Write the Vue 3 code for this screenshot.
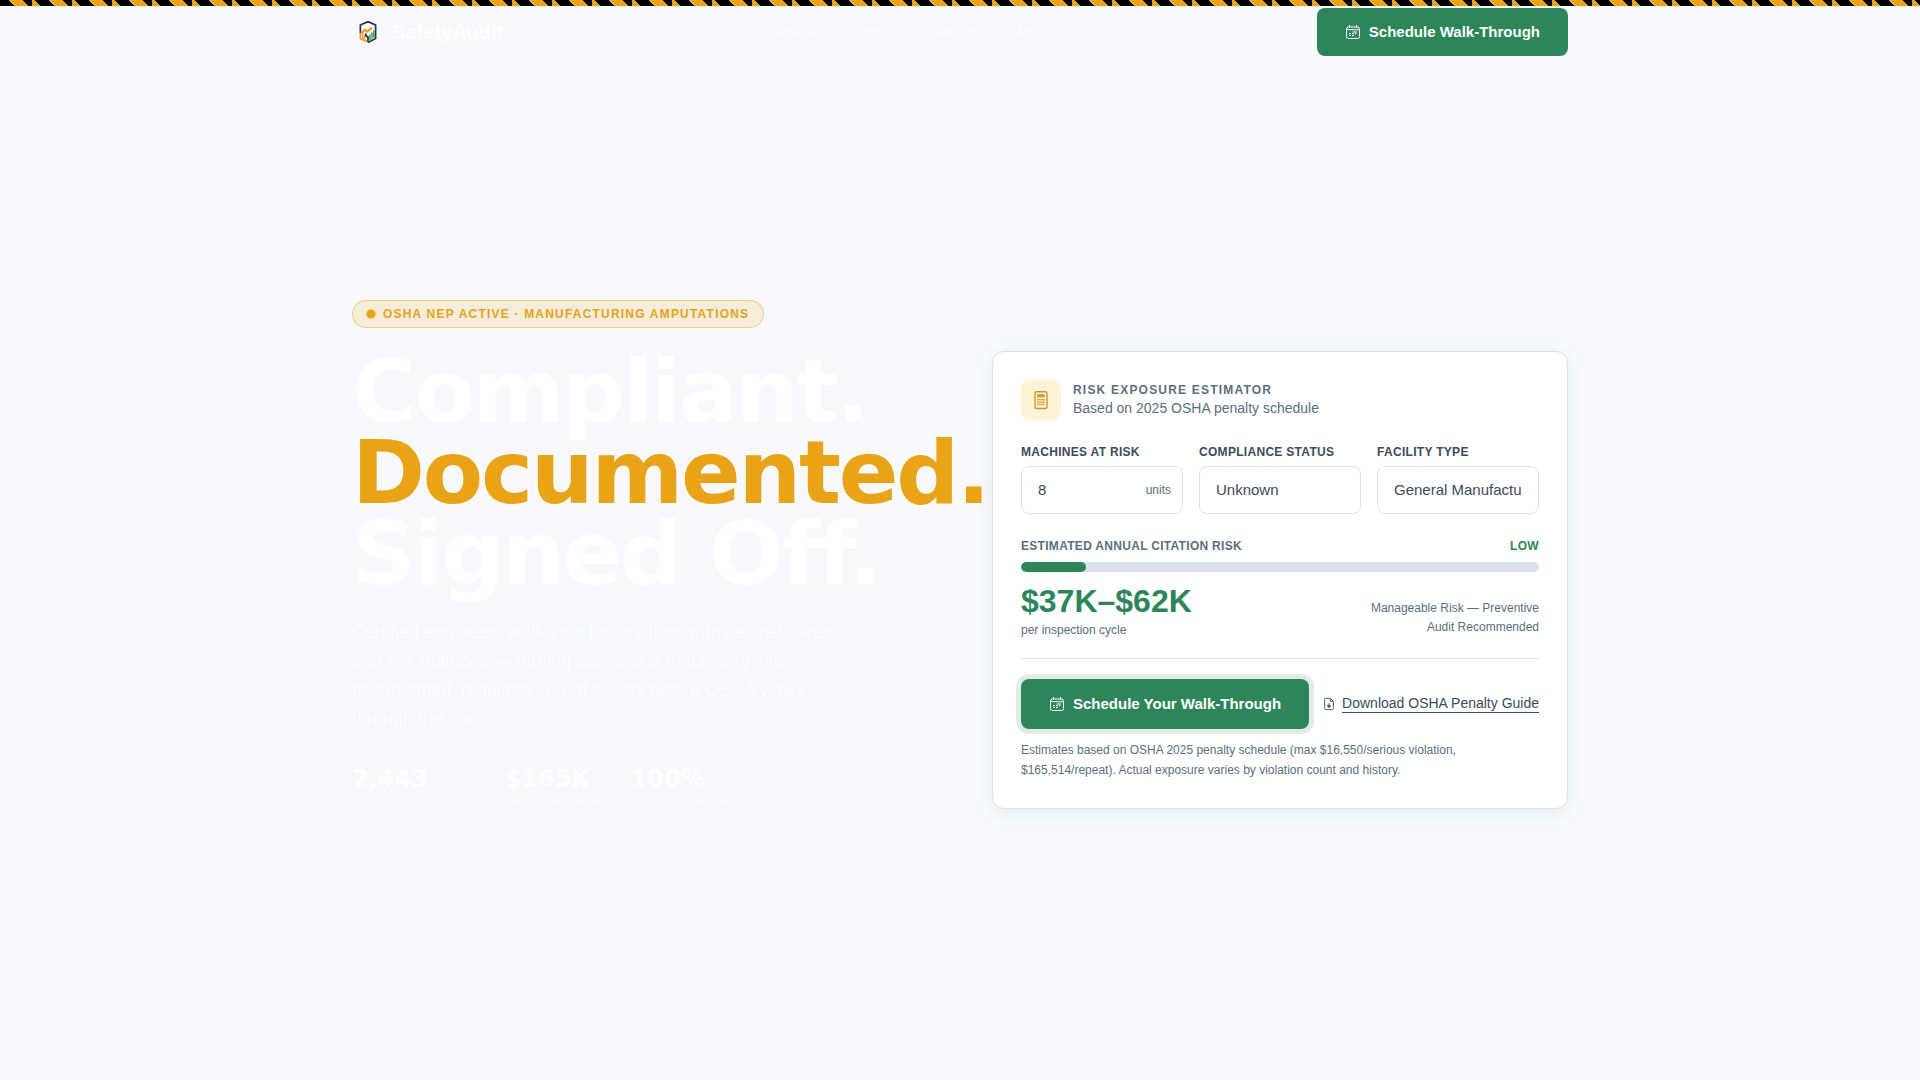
<script setup>
import { computed, ref } from "vue";

const navLinks = ["Services", "Process", "Results", "About"];

const stats = [
  { value: "2,443", label: "LOTO violations in 2024" },
  { value: "$165K", label: "max repeat penalty" },
  { value: "100%", label: "roadmap guarantee" }
];

const statusOptions = [
  { value: "unknown", label: "Unknown", weight: 1 },
  { value: "partial", label: "Partially compliant", weight: 0.8 },
  { value: "none", label: "Non-compliant", weight: 2.4 }
];

const facilityOptions = [
  { value: "general", label: "General Manufacturing", weight: 1 },
  { value: "metal", label: "Metal Fabrication", weight: 1.4 },
  { value: "food", label: "Food Processing", weight: 1.2 }
];

const machines = ref(8);
const complianceStatus = ref("unknown");
const facilityType = ref("general");

function weightOf(options, value) {
  return options.find((option) => option.value === value)?.weight ?? 1;
}

const exposure = computed(
  () =>
    (Number(machines.value) || 0) *
    weightOf(statusOptions, complianceStatus.value) *
    weightOf(facilityOptions, facilityType.value)
);

const estimateRange = computed(() => {
  const low = Math.round(exposure.value * 4.65);
  const high = Math.round(exposure.value * 7.75);

  return `$${low}K–$${high}K`;
});

const barWidth = computed(() => `${Math.min(100, exposure.value * 1.5625)}%`);

const riskLevel = computed(() => {
  if (exposure.value < 20) {
    return { key: "low", label: "Low", text: "Manageable Risk — Preventive Audit Recommended" };
  }

  if (exposure.value < 45) {
    return { key: "medium", label: "Medium", text: "Elevated Risk — Schedule Audit Soon" };
  }

  return { key: "high", label: "High", text: "Critical Risk — Immediate Audit Required" };
});
</script>

<template>
  <div class="page">
    <div class="hazard-stripe"></div>

    <header class="site-header">
      <div class="container site-header__inner">
        <a class="brand" href="#">
          <svg class="brand__mark" viewBox="0 0 32 32" fill="none" aria-hidden="true">
            <path d="M16 5.6 23.6 9v13.6L16 26.4" stroke="#263746" stroke-width="1.7" stroke-linejoin="round" />
            <path d="M16 5.6 8.4 9v8.4" stroke="#263746" stroke-width="1.7" stroke-linejoin="round" />
            <path d="M10 10.4 16 7.6l6 2.8-2 1.8-4-1.4-4 2z" fill="#fff" />
            <path d="M8.4 18v4.6L15.6 26" stroke="#f39a2e" stroke-width="1.7" />
            <path d="m9.4 17.6 3.4-3.8 2.4 1.8 4.6-4" stroke="#f39a2e" stroke-width="2.2" />
            <path d="M10.8 17v6M12.6 19V24" stroke="#f39a2e" stroke-width="1.3" />
            <path d="M13.8 17.4v2.2l2.2 1.6v4.6" stroke="#263746" stroke-width="1.8" />
            <path d="M18 18.4v5.6M20 16.6v6M21.8 14.4v7.2" stroke="#2d965a" stroke-width="1.4" />
          </svg>
          SafetyAudit
        </a>

        <nav class="site-nav" aria-label="Main">
          <a v-for="link in navLinks" :key="link" class="site-nav__link" :href="`#${link.toLowerCase()}`">{{ link }}</a>
        </nav>

        <button class="button" type="button">
          <svg class="icon" viewBox="0 0 16 16" fill="none" stroke="currentColor" aria-hidden="true">
            <rect x="1.5" y="3" width="13" height="11.5" rx="2" />
            <path d="M4.5 1v3M11.5 1v3M2 5.7h12M4 11.5h2M7 11.5h2M4 9.6h2M7 9.6h2M10 9.6h1.6M7.6 8h4.4" />
          </svg>
          Schedule Walk-Through
        </button>
      </div>
    </header>

    <main class="hero">
      <div class="container hero__grid">
        <section class="hero__copy">
          <p class="badge"><span class="badge__dot"></span>OSHA NEP Active · Manufacturing Amputations</p>

          <h1 class="hero__title">
            Compliant.<br />
            <span class="hero__accent">Documented.</span><br />
            Signed Off.
          </h1>

          <p class="hero__text">
            Certified engineers walk your factory floor with decibel meters and risk matrices — turning dangerous
            machinery into documented, regulation-proof assets before OSHA walks through the door.
          </p>

          <dl class="stats">
            <div v-for="stat in stats" :key="stat.label" class="stats__item">
              <dt class="stats__label">{{ stat.label }}</dt>
              <dd class="stats__value">{{ stat.value }}</dd>
            </div>
          </dl>

          <p class="hero__hint">
            Estimate your exposure below
            <svg class="hero__arrow" viewBox="0 0 14 14" fill="none" stroke="currentColor" aria-hidden="true">
              <path d="M7 2.5v8.5M3.5 7.5 7 11l3.5-3.5" />
            </svg>
          </p>
        </section>

        <section class="estimator" aria-labelledby="estimator-title">
          <div class="estimator__header">
            <div class="estimator__icon">
              <svg viewBox="0 0 20 20" fill="none" stroke="#cf962b" aria-hidden="true">
                <rect x="4" y="1.7" width="12" height="16.8" rx="1.8" fill="#fff3d6" stroke-width="1.4" />
                <rect x="6.8" y="4.8" width="6.4" height="2" fill="#cf962b" />
                <path d="M6.2 9.8h7.6M6.2 12.2h7.6M6.2 14.6h7.6" stroke-width="1.5" stroke-dasharray="1.4 .6" />
              </svg>
            </div>
            <div>
              <h2 id="estimator-title" class="estimator__title">Risk Exposure Estimator</h2>
              <p class="estimator__subtitle">Based on 2025 OSHA penalty schedule</p>
            </div>
          </div>

          <div class="fields">
            <div class="field">
              <label class="field__label" for="machines">Machines at Risk</label>
              <div class="field__box">
                <input id="machines" v-model="machines" class="field__control" type="text" inputmode="numeric" />
                <span class="field__unit">units</span>
              </div>
            </div>

            <div class="field">
              <label class="field__label" for="status">Compliance Status</label>
              <select id="status" v-model="complianceStatus" class="field__control">
                <option v-for="option in statusOptions" :key="option.value" :value="option.value">
                  {{ option.label }}
                </option>
              </select>
            </div>

            <div class="field">
              <label class="field__label" for="facility">Facility Type</label>
              <select id="facility" v-model="facilityType" class="field__control">
                <option v-for="option in facilityOptions" :key="option.value" :value="option.value">
                  {{ option.label }}
                </option>
              </select>
            </div>
          </div>

          <div :class="['result', `result--${riskLevel.key}`]">
            <div class="result__head">
              <span>Estimated Annual Citation Risk</span>
              <span class="result__level">{{ riskLevel.label }}</span>
            </div>
            <div class="result__track">
              <div class="result__bar" :style="{ width: barWidth }"></div>
            </div>
            <div class="result__summary">
              <div>
                <p class="result__amount">{{ estimateRange }}</p>
                <p class="result__period">per inspection cycle</p>
              </div>
              <p class="result__text">{{ riskLevel.text }}</p>
            </div>
          </div>

          <div class="actions">
            <button class="button button--pulse" type="button">
              <svg class="icon" viewBox="0 0 16 16" fill="none" stroke="currentColor" aria-hidden="true">
                <rect x="1.5" y="3" width="13" height="11.5" rx="2" />
                <path d="M4.5 1v3M11.5 1v3M2 5.7h12M4 11.5h2M7 11.5h2M4 9.6h2M7 9.6h2M10 9.6h1.6M7.6 8h4.4" />
              </svg>
              Schedule Your Walk-Through
            </button>

            <a class="guide-link" href="#guide">
              <svg class="guide-link__icon" viewBox="0 0 16 16" fill="none" stroke="currentColor" aria-hidden="true">
                <path d="M4 1.5h5.5L13 5v8.2c0 .8-.5 1.3-1.3 1.3H4.3c-.8 0-1.3-.5-1.3-1.3V2.5c0-.6.4-1 1-1zM9.5 1.5V5H13" />
                <path d="M8 7v4.5M6 9.7l2 2 2-2" stroke-width="1.3" />
              </svg>
              <span class="guide-link__text">Download OSHA Penalty Guide</span>
            </a>
          </div>

          <p class="estimator__note">
            Estimates based on OSHA 2025 penalty schedule (max $16,550/serious violation, $165,514/repeat). Actual
            exposure varies by violation count and history.
          </p>
        </section>
      </div>
    </main>
  </div>
</template>

<style>
body {
  margin: 0;
  background: #f7f9fc;
}
</style>

<style scoped>
.page {
  --color-green: #2d8659;
  --color-amber: #e8a317;
  --color-ink: #3d4b5c;
  --color-ink-soft: #5c6f80;
  --color-line: #d8e2ec;

  color: var(--color-ink);
  font-family: "Liberation Sans", Arial, sans-serif;
  font-size: 14px;
}

.page *,
.page *::before {
  box-sizing: border-box;
}

p,
h1,
h2,
dl,
dd {
  margin: 0;
}

.container {
  width: 100%;
  max-width: 1280px;
  margin: 0 auto;
  padding: 0 32px;
}

.hazard-stripe {
  position: fixed;
  inset: 0 0 auto;
  z-index: 20;
  height: 6px;
  background: repeating-linear-gradient(45deg, var(--color-amber) 0 10px, #000 10px 20px) 32px 0 / 40px 12px;
}

.site-header__inner {
  display: flex;
  align-items: center;
  justify-content: space-between;
  height: 64px;
}

.brand {
  display: inline-flex;
  align-items: center;
  gap: 8px;
  color: #fff;
  font-size: 20px;
  font-weight: 700;
  text-decoration: none;
}

.brand__mark {
  width: 32px;
  height: 32px;
}

.site-nav {
  display: flex;
  gap: 32px;
}

.site-nav__link {
  color: rgba(255, 255, 255, 0.9);
  text-decoration: none;
}

.button {
  display: inline-flex;
  align-items: center;
  gap: 8px;
  min-height: 48px;
  padding: 0 28px;
  border: 0;
  border-radius: 8px;
  background: var(--color-green);
  color: #fff;
  font-family: inherit;
  font-size: 15px;
  font-weight: 700;
  line-height: 24px;
  white-space: nowrap;
  cursor: pointer;
}

.button--pulse {
  min-height: 50px;
  box-shadow: 0 0 0 5px rgba(45, 134, 89, 0.15);
}

.icon {
  flex: none;
  width: 16px;
  height: 16px;
}

.hero {
  display: grid;
  align-items: center;
  min-height: calc(100vh - 64px);
  padding-top: 16px;
  box-sizing: border-box;
}

.hero__grid {
  display: grid;
  grid-template-columns: repeat(2, minmax(0, 1fr));
  align-items: center;
  gap: 64px;
}

.badge {
  display: flex;
  align-items: center;
  gap: 8px;
  width: fit-content;
  height: 28px;
  padding: 0 14px;
  border: 1px solid rgba(232, 163, 23, 0.4);
  border-radius: 14px;
  background: rgba(232, 163, 23, 0.15);
  color: var(--color-amber);
  font-size: 12px;
  font-weight: 700;
  letter-spacing: 0.1em;
  text-transform: uppercase;
  white-space: nowrap;
}

.badge__dot {
  width: 8px;
  height: 8px;
  border-radius: 50%;
  background: var(--color-amber);
  box-shadow: 0 0 0 1px rgba(232, 163, 23, 0.5);
}

.hero__title {
  margin-top: 23px;
  color: #fff;
  font-family: "DejaVu Sans", sans-serif;
  font-size: 88px;
  font-weight: 700;
  line-height: 81px;
  letter-spacing: -0.025em;
}

.hero__accent {
  color: var(--color-amber);
}

.hero__text {
  max-width: 500px;
  margin-top: 24px;
  color: rgba(255, 255, 255, 0.85);
  font-size: 18px;
  line-height: 29px;
}

.stats {
  display: flex;
  gap: 24px;
  margin-top: 32px;
}

.stats__item {
  display: flex;
  flex-direction: column-reverse;
}

.stats__value {
  color: #fff;
  font-family: "DejaVu Sans", sans-serif;
  font-size: 24px;
  font-weight: 700;
  line-height: 26px;
}

.stats__label {
  color: rgba(255, 255, 255, 0.7);
  font-size: 12px;
  line-height: 16px;
}

.hero__hint {
  display: flex;
  align-items: center;
  gap: 8px;
  margin-top: 32px;
  color: rgba(255, 255, 255, 0.7);
  line-height: 20px;
}

.hero__arrow {
  width: 14px;
  height: 14px;
}

.estimator {
  padding: 28px;
  border: 1px solid var(--color-line);
  border-radius: 12px;
  background: #fff;
  box-shadow: 0 4px 16px rgba(61, 75, 92, 0.08);
}

.estimator__header {
  display: flex;
  align-items: center;
  gap: 12px;
}

.estimator__icon {
  display: grid;
  place-items: center;
  width: 40px;
  height: 40px;
  border-radius: 8px;
  background: #fff3d6;
}

.estimator__icon svg {
  width: 20px;
  height: 20px;
}

.estimator__title {
  color: var(--color-ink-soft);
  font-size: 12px;
  line-height: 16px;
  letter-spacing: 0.1em;
  text-transform: uppercase;
}

.estimator__subtitle {
  color: var(--color-ink-soft);
  line-height: 20px;
}

.estimator__note {
  margin-top: 11px;
  color: var(--color-ink-soft);
  font-size: 12px;
  line-height: 20px;
}

.fields {
  display: grid;
  grid-template-columns: repeat(3, minmax(0, 1fr));
  gap: 16px;
  margin-top: 24px;
}

.field__label {
  display: block;
  margin-bottom: 6px;
  font-size: 12px;
  font-weight: 700;
  line-height: 16px;
  letter-spacing: 0.025em;
  text-transform: uppercase;
}

.field__box {
  position: relative;
}

.field__control {
  display: block;
  width: 100%;
  height: 48px;
  padding: 0 16px 2px;
  border: 1px solid var(--color-line);
  border-radius: 8px;
  outline: none;
  background: #fff;
  color: var(--color-ink);
  font-family: inherit;
  font-size: 15px;
  appearance: none;
}

.field__control:focus-visible {
  border-color: var(--color-green);
}

.field__unit {
  position: absolute;
  top: 0;
  right: 12px;
  color: var(--color-ink-soft);
  font-size: 12px;
  line-height: 48px;
  pointer-events: none;
}

.result {
  --color-level: var(--color-green);

  margin-top: 24px;
  padding-bottom: 18px;
  border-bottom: 1px solid var(--color-line);
}

.result--medium {
  --color-level: var(--color-amber);
}

.result--high {
  --color-level: #c0392b;
}

.result__head {
  display: flex;
  justify-content: space-between;
  color: var(--color-ink-soft);
  font-size: 12px;
  font-weight: 700;
  line-height: 16px;
  letter-spacing: 0.025em;
  text-transform: uppercase;
}

.result__level,
.result__amount {
  color: var(--color-level);
}

.result__track {
  height: 10px;
  margin-top: 8px;
  overflow: hidden;
  border-radius: 5px;
  background: var(--color-line);
}

.result__bar {
  height: 100%;
  border-radius: 5px;
  background: var(--color-level);
}

.result__summary {
  display: flex;
  align-items: flex-end;
  justify-content: space-between;
  margin-top: 12px;
}

.result__amount {
  font-size: 32px;
  font-weight: 700;
  line-height: 34px;
}

.result__period {
  margin-top: 2px;
  color: var(--color-ink-soft);
  font-size: 12px;
  line-height: 20px;
}

.result__text {
  max-width: 180px;
  padding-bottom: 3px;
  color: var(--color-ink-soft);
  font-size: 12px;
  line-height: 19px;
  text-align: right;
}

.actions {
  display: flex;
  align-items: center;
  justify-content: space-between;
  margin-top: 20px;
}

.guide-link {
  display: inline-flex;
  align-items: center;
  gap: 6px;
  color: var(--color-ink);
  text-decoration: none;
  white-space: nowrap;
}

.guide-link__icon {
  width: 14px;
  height: 14px;
}

.guide-link__text {
  padding-bottom: 1px;
  border-bottom: 1px solid currentColor;
}

@media (max-width: 1100px) {
  .hero__grid {
    grid-template-columns: minmax(0, 1fr);
  }
}

@media (max-width: 760px) {
  .site-nav {
    display: none;
  }

  .hero__title {
    font-size: 48px;
    line-height: 48px;
  }

  .fields {
    grid-template-columns: minmax(0, 1fr);
  }

  .actions {
    flex-wrap: wrap;
    gap: 16px;
  }
}
</style>
